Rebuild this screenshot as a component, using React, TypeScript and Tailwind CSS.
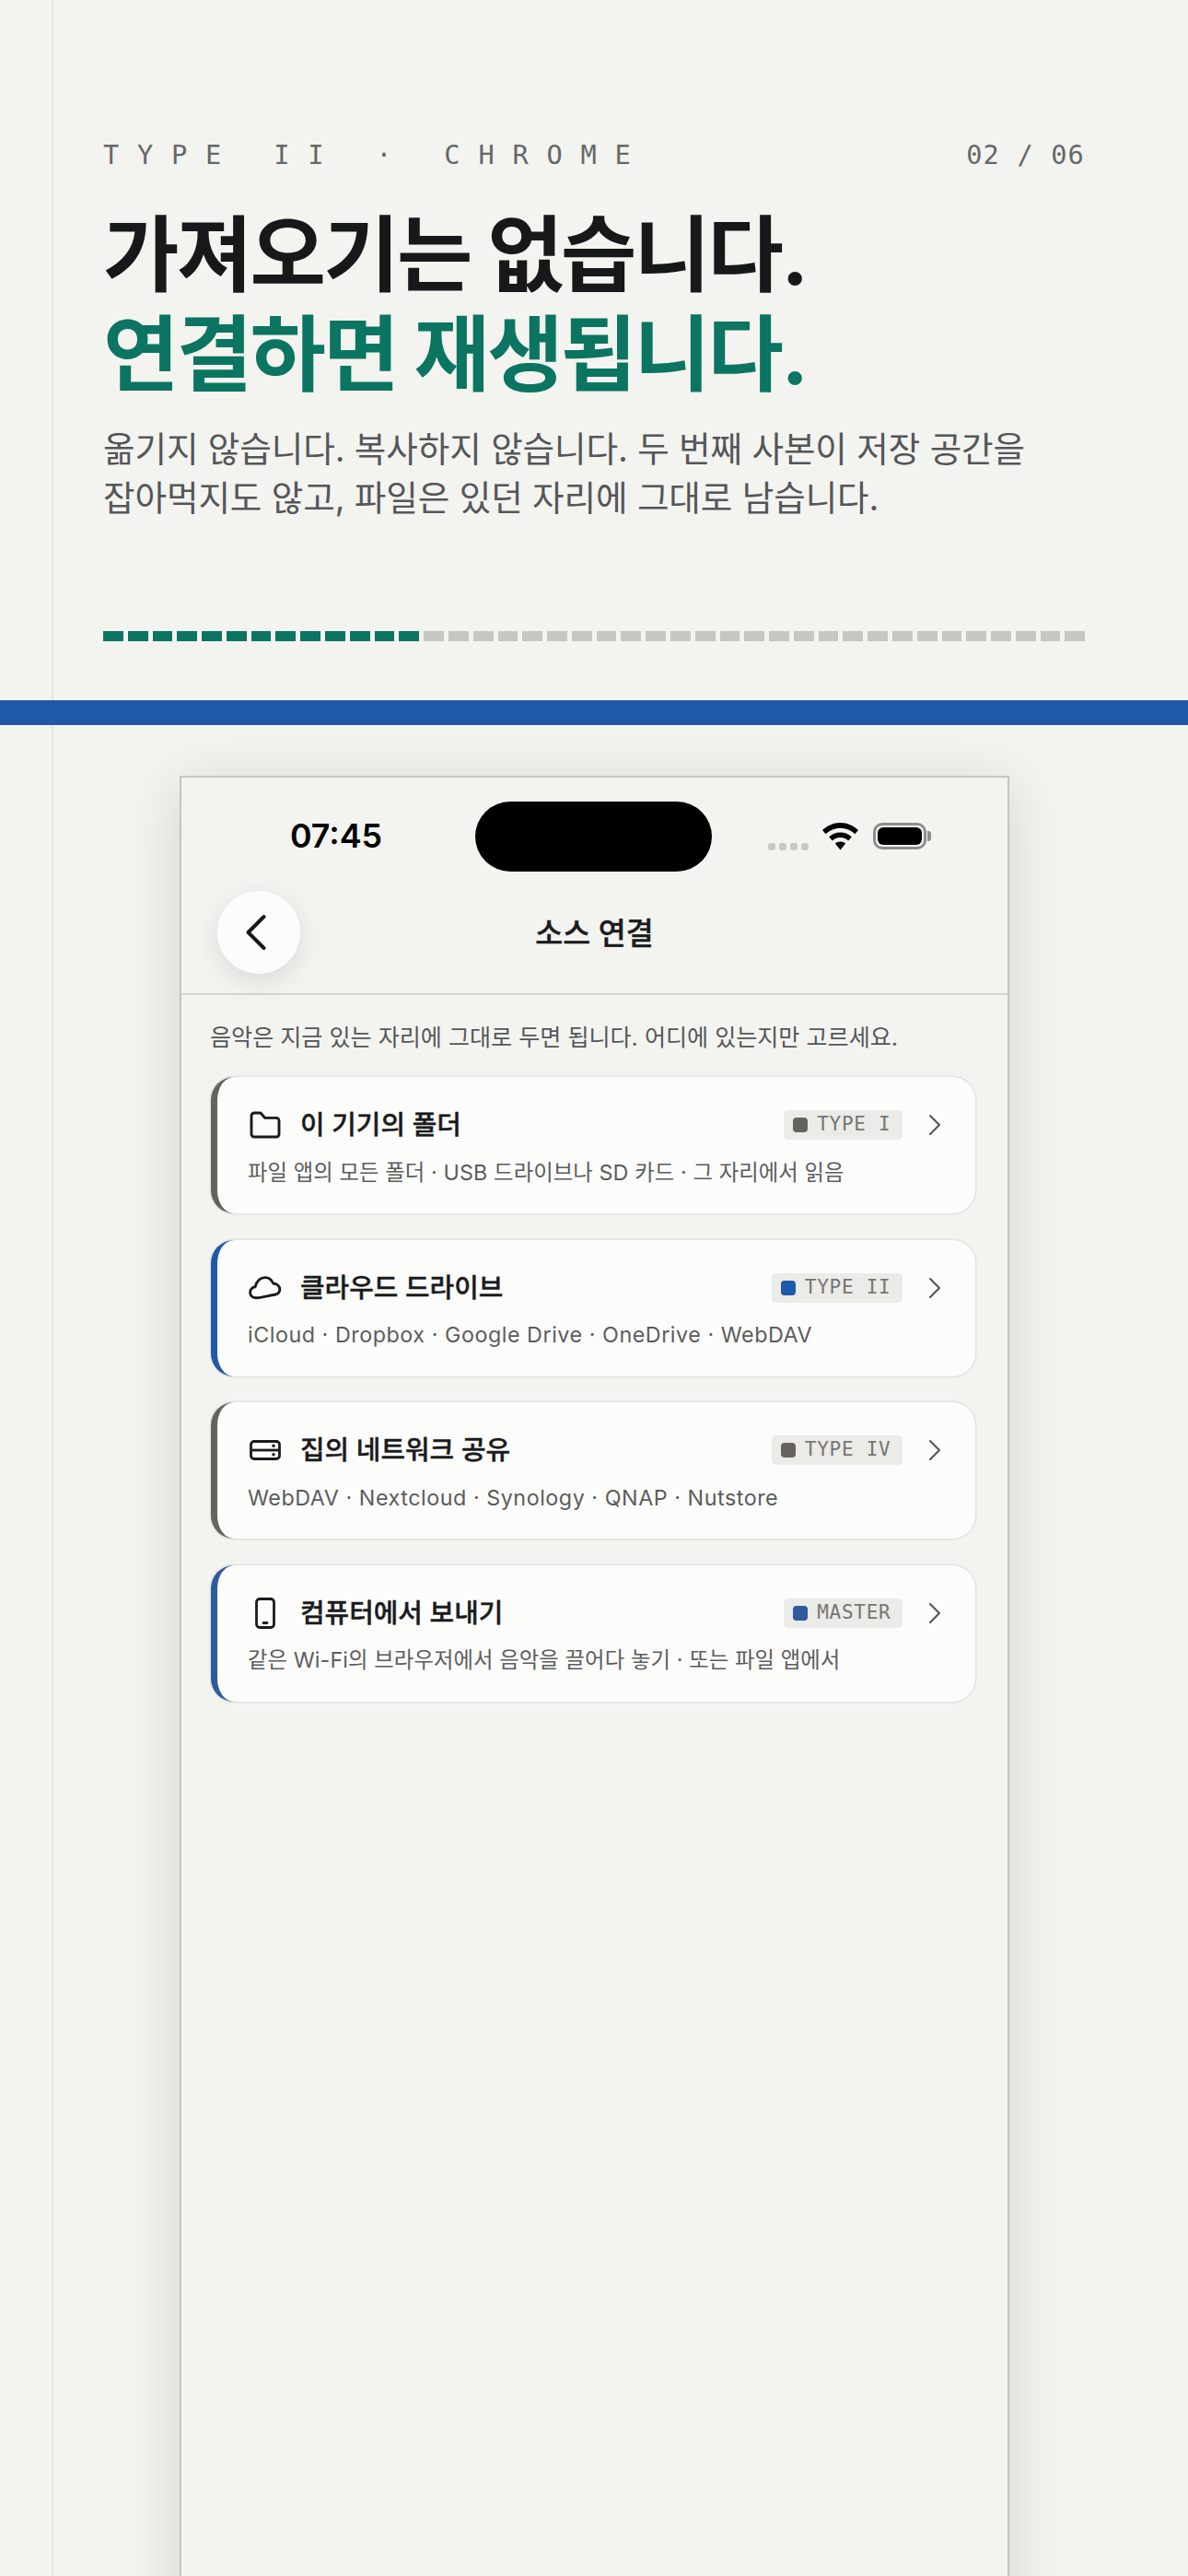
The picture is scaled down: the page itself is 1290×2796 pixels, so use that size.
import React from "react";
import { ChevronLeft, ChevronRight } from "lucide-react";

const sans = "font-['Inter','Noto_Sans_CJK_KR',sans-serif]";

function FolderIcon() {
  return (
    <svg width="34" height="30" viewBox="0 0 34 30" fill="none" stroke="#1a1b1d" strokeWidth="2.9" strokeLinejoin="round">
      <path d="M2 5a3 3 0 0 1 3-3h7l4.6 5.4H29a3 3 0 0 1 3 3V25a3 3 0 0 1-3 3H5a3 3 0 0 1-3-3Z" />
    </svg>
  );
}

function CloudIcon() {
  return (
    <svg width="36" height="26" viewBox="0 0 36 26" fill="none" stroke="#1a1b1d" strokeWidth="2.9" strokeLinejoin="round">
      <path d="M8 23.7C4 23.7 1.6 21 1.6 17.8C1.6 14.6 4 12.3 7 11.8C8.8 5.5 13 1.6 18 1.6C22.4 1.6 25 4.2 26.6 8C30.8 8.4 33.8 11 33.8 14.6C33.8 17.8 31.5 19.8 28.5 20.2C22 21 14 23.7 8 23.7Z" />
    </svg>
  );
}

function DriveIcon() {
  return (
    <svg width="34" height="22" viewBox="0 0 34 22" fill="none" stroke="#1a1b1d" strokeWidth="2.8">
      <rect x="1.5" y="1.5" width="31" height="19" rx="3.5" />
      <path d="M1.5 11H32.5" />
      <circle cx="26" cy="6.3" r="1.7" fill="#1a1b1d" stroke="none" />
      <circle cx="26" cy="15.7" r="1.7" fill="#1a1b1d" stroke="none" />
    </svg>
  );
}

function PhoneIcon() {
  return (
    <svg width="22" height="34" viewBox="0 0 22 34" fill="none" stroke="#1a1b1d" strokeWidth="2.8">
      <rect x="1.5" y="1.5" width="19" height="31" rx="3.5" />
      <path d="M9 27.5H13" strokeLinecap="round" />
    </svg>
  );
}

function Wifi() {
  return (
    <svg width="39" height="30" viewBox="0 0 39 30" fill="#000">
      <path d="M19.5 0C27 0 33.6 3 39 8L35.4 12.2C31 8.2 25.6 5.8 19.5 5.8C13.4 5.8 8 8.2 3.6 12.2L0 8C5.4 3 12 0 19.5 0Z" />
      <path d="M19.5 10.4C24.4 10.4 28.4 12.2 31.8 15.4L28.2 19.4C25.8 17.2 23 15.9 19.5 15.9C16 15.9 13.2 17.2 10.8 19.4L7.2 15.4C10.6 12.2 14.6 10.4 19.5 10.4Z" />
      <path d="M19.5 20.4C21.8 20.4 23.6 21.2 25.2 22.6L19.5 29.6L13.8 22.6C15.4 21.2 17.2 20.4 19.5 20.4Z" />
    </svg>
  );
}

function Battery() {
  return (
    <div className="flex items-center gap-[1px]">
      <div className="flex h-[29px] w-[58px] items-center justify-center rounded-[10px] border-[3px] border-[#8e8e8c] p-[2px]">
        <div className="h-full w-full rounded-[6px] bg-black" />
      </div>
      <div className="h-[11px] w-[4px] rounded-r-[3px] bg-[#8e8e8c]" />
    </div>
  );
}

type Row = {
  title: string;
  desc: string;
  tag: string;
  track: string;
  border: string;
  dot: string;
  icon: React.ReactNode;
};

const rows: Row[] = [
  {
    title: "이 기기의 폴더",
    desc: "파일 앱의 모든 폴더 · USB 드라이브나 SD 카드 · 그 자리에서 읽음",
    tag: "TYPE I",
    track: "tracking-[0.005em]",
    border: "border-l-[#66635f]",
    dot: "bg-[#66635f]",
    icon: <FolderIcon />,
  },
  {
    title: "클라우드 드라이브",
    desc: "iCloud · Dropbox · Google Drive · OneDrive · WebDAV",
    tag: "TYPE II",
    track: "tracking-[0.023em]",
    border: "border-l-[#2058a8]",
    dot: "bg-[#2058a8]",
    icon: <CloudIcon />,
  },
  {
    title: "집의 네트워크 공유",
    desc: "WebDAV · Nextcloud · Synology · QNAP · Nutstore",
    tag: "TYPE IV",
    track: "tracking-[0.023em]",
    border: "border-l-[#66635f]",
    dot: "bg-[#66635f]",
    icon: <DriveIcon />,
  },
  {
    title: "컴퓨터에서 보내기",
    desc: "같은 Wi-Fi의 브라우저에서 음악을 끌어다 놓기 · 또는 파일 앱에서",
    tag: "MASTER",
    track: "tracking-[0.005em]",
    border: "border-l-[#2f5a9e]",
    dot: "bg-[#2f5a9e]",
    icon: <PhoneIcon />,
  },
];

function Card({ row }: { row: Row }) {
  return (
    <div className={`flex h-[148px] flex-col justify-center rounded-[25px] border-l-[7px] bg-[#fcfcfa] pl-[33px] pr-[24px] pt-[5.5px] shadow-[0_0_0_1.5px_#e3e4df] ${row.border}`}>
      <div className="flex h-[40px] items-center">
        <div className="flex w-[38px] justify-center">{row.icon}</div>
        <div className="ml-[19px] flex-1 text-[28.9px] font-medium leading-[40px] text-[#1a1b1d] [-webkit-text-stroke:0.4px_#1a1b1d]">{row.title}</div>
        <div className="flex h-[32px] items-center gap-[10px] rounded-[5px] bg-[#ebebe7] pl-[10px] pr-[12px]">
          <div className={`h-[16px] w-[16px] rounded-[4px] ${row.dot}`} />
          <div className="font-['DejaVu_Sans_Mono',monospace] text-[21px] tracking-[0.035em] text-[#767673]">{row.tag}</div>
        </div>
        <ChevronRight className="ml-[15px]" size={40} strokeWidth={1.25} color="#55565a" />
      </div>
      <div className={`mt-[13.5px] text-[23.3px] leading-[36px] text-[#5b5c5e] ${row.track}`}>{row.desc}</div>
    </div>
  );
}

export default function App() {
  const segs = Array.from({ length: 40 }, (_, i) => i);
  return (
    <div className={`relative h-[2796px] w-[1290px] overflow-hidden bg-[#f3f4ef] ${sans}`}>
      <div className="absolute bottom-0 left-[56px] top-0 w-[2px] bg-[#e3e4df]" />

      <header className="relative h-[760px] px-[112px] pt-[148px]">
        <div className="flex items-center justify-between font-['DejaVu_Sans_Mono',monospace] text-[28.67px] leading-[40px] text-[#66676a]">
          <span className="tracking-[0.69em]">TYPE II · CHROME</span>
          <span className="tracking-[0.04em]">02 / 06</span>
        </div>
        <h1 className="mt-[35px] text-[89.6px] font-bold leading-[108px] tracking-[-0.03em] text-[#17181a]">
          가져오기는 없습니다.
          <br />
          <span className="text-[#0b7561]">연결하면 재생됩니다.</span>
        </h1>
        <p className="mt-[22px] text-[37.6px] font-normal leading-[53px] tracking-[-0.003em] text-[#55565a]">
          옮기지 않습니다. 복사하지 않습니다. 두 번째 사본이 저장 공간을
          <br />
          잡아먹지도 않고, 파일은 있던 자리에 그대로 남습니다.
        </p>
        <div className="absolute left-[112px] right-[112px] top-[685px] flex h-[11px] gap-[5px]">
          {segs.map((i) => (
            <div key={i} className={`flex-1 ${i < 13 ? "bg-[#0b7561]" : "bg-[#c6c7c1]"}`} />
          ))}
        </div>
      </header>

      <div className="relative h-[27px] bg-[#2058a8]" />

      <div className="relative ml-[195px] mt-[55px] h-[2200px] w-[901px] border-2 border-[#c4c5bf] bg-[#f3f4ef] shadow-[0_10px_60px_rgba(0,0,0,0.13)]">
        <div className="grid grid-cols-[319px_257px_1fr] pt-[26px]">
          <div className="flex items-center justify-center pl-[17px] text-[35.8px] font-semibold leading-none text-black">07:45</div>
          <div className="h-[76px] rounded-[38px] bg-black" />
          <div className="flex items-start pl-[61px] pt-[23px]">
            <div className="mt-[22px] flex gap-[4px]">
              <div className="h-[8px] w-[8px] rounded-[3px] bg-[#c8c8c4]" />
              <div className="h-[8px] w-[8px] rounded-[3px] bg-[#c8c8c4]" />
              <div className="h-[8px] w-[8px] rounded-[3px] bg-[#c8c8c4]" />
              <div className="h-[8px] w-[8px] rounded-[3px] bg-[#c8c8c4]" />
            </div>
            <div className="ml-[15px]"><Wifi /></div>
            <div className="ml-[16px]"><Battery /></div>
          </div>
        </div>

        <div className="grid h-[134px] grid-cols-[1fr_auto_1fr] items-center border-b-2 border-[#d2d3cd]">
          <div className="pl-[39px]">
            <div className="flex h-[90px] w-[90px] items-center justify-center rounded-full bg-[#fcfcfa] shadow-[0_8px_28px_rgba(0,0,0,0.1)]">
              <ChevronLeft className="mr-[7px]" size={68} strokeWidth={1.4} color="#17181a" />
            </div>
          </div>
          <div className="pt-[3px] text-[32.6px] font-medium text-[#1a1b1d] [-webkit-text-stroke:0.4px_#1a1b1d]">소스 연결</div>
          <div />
        </div>

        <div className="pl-[32px] pr-[35.5px] pt-[28px]">
          <div className="-ml-[1px] text-[25.08px] leading-[36px] text-[#55565a]">
            음악은 지금 있는 자리에 그대로 두면 됩니다. 어디에 있는지만 고르세요.
          </div>
          <div className="mt-[25px] flex flex-col gap-[28.6px]">
            {rows.map((r) => (
              <Card key={r.tag} row={r} />
            ))}
          </div>
        </div>
      </div>
    </div>
  );
}
